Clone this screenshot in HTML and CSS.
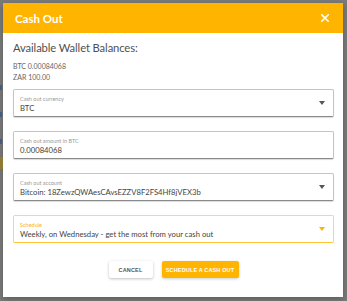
FILE: index.html
```html
<!DOCTYPE html>
<html lang="en">
<head>
  <meta charset="UTF-8">
  <meta name="viewport" content="width=device-width, initial-scale=1.0">
  <title>Cash Out</title>
  <link rel="stylesheet" href="styles.css">
</head>
<body>
  <div class="backdrop">
    <div class="behind-left">
      <span class="ghost-mark g1"></span>
      <span class="ghost-mark g2"></span>
      <span class="ghost-mark g3"></span>
      <span class="ghost-bar"></span>
    </div>

    <div class="dialog">
      <div class="dialog-header">
        <h1>Cash Out</h1>
        <button class="close-btn" aria-label="Close">
          <svg width="8" height="8" viewBox="0 0 8 8">
            <path d="M0.8 0.8 L7.2 7.2 M7.2 0.8 L0.8 7.2" stroke="#fff" stroke-width="1.6" stroke-linecap="square"/>
          </svg>
        </button>
      </div>

      <div class="dialog-body">
        <h2>Available Wallet Balances:</h2>
        <div class="balances">
          <p>BTC 0.00084068</p>
          <p>ZAR 100.00</p>
        </div>

        <div class="field select">
          <label>Cash out currency</label>
          <div class="value">BTC</div>
          <span class="arrow"></span>
        </div>

        <div class="field">
          <label>Cash out amount in BTC</label>
          <div class="value">0.00084068</div>
        </div>

        <div class="field select">
          <label>Cash out account</label>
          <div class="value">Bitcoin: 18ZewzQWAesCAvsEZZV8F2FS4Hf8jVEX3b</div>
          <span class="arrow"></span>
        </div>

        <div class="field select focused">
          <label>Schedule</label>
          <div class="value">Weekly, on Wednesday - get the most from your cash out</div>
          <span class="arrow"></span>
        </div>

        <div class="actions">
          <button class="btn btn-cancel">Cancel</button>
          <button class="btn btn-primary">Schedule a cash out</button>
        </div>
      </div>
    </div>
  </div>
</body>
</html>
```

FILE: styles.css
```css
/* Universal Styling */
* {
  margin: 0;
  padding: 0;
  box-sizing: border-box;
}

body {
  font-family: 'Lato', 'Open Sans', sans-serif;
  background-color: #7a7a7a;
  width: 347px;
  height: 301px;
  overflow: hidden;
}

.backdrop {
  position: relative;
  width: 347px;
  height: 301px;
  padding: 3px 4px 4px 3px;
}

/* bits of the page showing under the overlay */
.behind-left {
  position: absolute;
  left: 0;
  top: 0;
  width: 3px;
  height: 301px;
}

.ghost-mark {
  position: absolute;
  left: 0;
  width: 2px;
  height: 5px;
  background-color: #3f5e84;
}

.g1 { top: 85px; }
.g2 { top: 112px; }
.g3 { top: 139px; }

.ghost-bar {
  position: absolute;
  left: 0;
  top: 157px;
  width: 3px;
  height: 12px;
  background-color: #8f7a34;
}

.dialog {
  width: 340px;
  height: 294px;
  background-color: #fff;
  box-shadow: 0 2px 6px rgba(0, 0, 0, 0.25);
  display: flex;
  flex-direction: column;
}

.dialog-header {
  height: 30px;
  background-color: #ffb400;
  display: flex;
  align-items: center;
  justify-content: space-between;
  padding: 0 14px 0 12px;
}

.dialog-header h1 {
  font-size: 11.5px;
  font-weight: 700;
  color: #fff;
}

.close-btn {
  background: none;
  border: none;
  display: flex;
  cursor: pointer;
}

.dialog-body {
  padding: 8px 9px 0 10px;
  display: flex;
  flex-direction: column;
}

h2 {
  font-size: 11.2px;
  font-weight: 400;
  color: #4f4f4f;
  line-height: 14px;
  letter-spacing: -0.1px;
  margin-bottom: 5.5px;
}

.balances p {
  font-size: 7px;
  color: #666;
  line-height: 11px;
}

.balances {
  margin-bottom: 6.5px;
}

.field {
  position: relative;
  height: 28px;
  border: 1px solid #c4c4c4;
  border-bottom-color: #8a8a8a;
  border-radius: 2px;
  padding: 5px 6px 0 6px;
  margin-bottom: 14px;
  box-shadow: 0 1px 1px rgba(0, 0, 0, 0.15);
}

.field label {
  display: block;
  font-size: 5.5px;
  line-height: 8px;
  color: #9a9a9a;
}

.field .value {
  font-size: 7.7px;
  line-height: 11px;
  color: #444;
  white-space: nowrap;
}

.field .arrow {
  position: absolute;
  right: 8px;
  top: 11px;
  width: 0;
  height: 0;
  border-left: 3.5px solid transparent;
  border-right: 3.5px solid transparent;
  border-top: 4px solid #555;
}

.field.focused {
  border-color: #ffd874;
  border-bottom-color: #ffc233;
  box-shadow: none;
}

.field.focused label {
  color: #ffb400;
}

.field.focused .arrow {
  border-top-color: #ffb400;
}

.actions {
  display: flex;
  justify-content: center;
  gap: 9px;
  margin-top: 4px;
}

.btn {
  height: 17px;
  border: none;
  border-radius: 2px;
  font-family: 'Liberation Sans', sans-serif;
  font-size: 5.5px;
  font-weight: 700;
  letter-spacing: 0.15px;
  text-transform: uppercase;
  cursor: pointer;
}

.btn-cancel {
  width: 44px;
  background-color: #fff;
  color: #555;
  box-shadow: 0 1px 3px rgba(0, 0, 0, 0.25);
}

.btn-primary {
  width: 77px;
  background-color: #ffb400;
  color: #fff;
  box-shadow: 0 1px 3px rgba(0, 0, 0, 0.2);
}
```
